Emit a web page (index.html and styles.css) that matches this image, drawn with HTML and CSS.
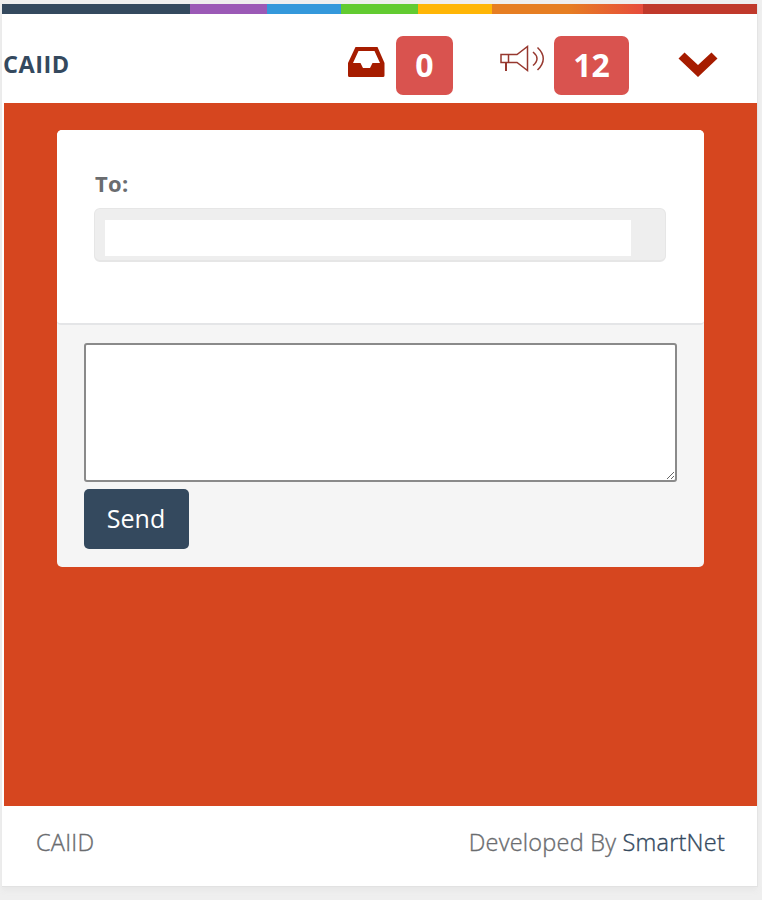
FILE: index.html
```html
<!DOCTYPE html>
<html lang="en">
<head>
<meta charset="utf-8">
<title>CAIID</title>
<link rel="stylesheet" href="styles.css">
</head>
<body>
<div class="page">
  <div class="color-line"></div>
  <header class="header">
    <span class="brand">CAIID</span>
    <nav class="nav">
      <svg class="inbox" width="37" height="30" viewBox="0 0 37 30"><path fill="#a61c00" fill-rule="evenodd" d="M7.500 0H29.500L36.500 16V28.500Q36.500 30 35 30H1.500Q0 30 0 28.500V16ZM10.500 4 5 16H12.500L15 21H22L24.500 16H32L26.500 4Z"/></svg>
      <span class="badge badge-inbox">0</span>
      <svg class="horn" width="45" height="28" viewBox="0 0 45 28"><g fill="none" stroke="#97382f" stroke-width="1.500"><path d="M1 9.500H17L27.500 1.500V25.500L17 17.500H1ZM8.500 9.500V17.500"/><path stroke-width="2" d="M6 17.500V26"/><path d="M33 7Q41 13.500 33 20.500M37.500 2.500Q49 13.500 37.500 25"/></g></svg>
      <span class="badge badge-news">12</span>
      <svg class="chevron" width="40" height="26" viewBox="0 0 40 26"><path fill="#a61c00" d="M.5 6.500 6.500.5 20 13 33.500.5 39.500 6.500 20 25Z"/></svg>
    </nav>
  </header>
  <main class="content">
    <section class="card">
      <div class="recipient">
        <label class="label" for="to">To:</label>
        <div class="field"><input class="to" id="to" type="text"></div>
      </div>
      <form class="compose">
        <textarea class="message" aria-label="Message"></textarea>
        <button class="send" type="button">Send</button>
      </form>
    </section>
  </main>
  <footer class="footer">
    <span>CAIID</span>
    <span>Developed By <a class="link">SmartNet</a></span>
  </footer>
</div>
</body>
</html>
```
FILE: styles.css
```css
* { box-sizing: border-box; }
body {
  margin: 0;
  height: 900px;
  overflow: hidden;
  background: #efefef;
  font-family: "Open Sans", sans-serif;
  color: #6a6c6f;
}
.page {
  width: 755px;
  height: 883px;
  margin: 4px 0 0 2px;
  background: #fff;
  border-bottom: 1px solid #e2e2e2;
  box-shadow: 1px 0 0 #e4e4e4, 0 3px 6px #e6e6e6;
}
.color-line {
  height: 10px;
  background: linear-gradient(to right, #34495e 188px, #9b59b6 188px 265px, #3498db 265px 339px, #62cb31 339px 416px, #ffb606 416px 490px, #e67e22 490px 566px, #e74c3c 641px, #c0392b 641px);
}
.header {
  height: 89px;
  display: flex;
  justify-content: space-between;
}
.brand {
  padding: 35px 0 0 1px;
  font-size: 23.5px;
  letter-spacing: 0.5px;
  line-height: 31px;
  font-weight: 700;
  color: #34495e;
}
.nav {
  display: flex;
  align-items: flex-start;
  padding-right: 39px;
}
.inbox { margin: 33px 11px 0 0; }
.horn { margin: 31px 9px 0 47px; }
.chevron { margin: 38px 0 0 49px; }
.badge {
  height: 59px;
  margin-top: 22px;
  border-radius: 7px;
  background: #d9534f;
  color: #fff;
  font-size: 32px;
  line-height: 58px;
  font-weight: 700;
  text-align: center;
}
.badge-inbox { width: 57px; }
.badge-news { width: 75px; }
.content {
  height: 703px;
  margin-left: 2px;
  padding: 27px 53px 0;
  background: #d6461f;
}
.card {
  width: 647px;
  height: 437px;
  border-radius: 5px;
  background: #f5f5f5;
  overflow: hidden;
}
.recipient {
  height: 195px;
  padding: 38px 38px 0 37px;
  border-bottom: 2px solid #e4e5e7;
  border-radius: 4px;
  background: #fff;
}
.label {
  display: block;
  padding-left: 1px;
  font-size: 22px;
  letter-spacing: 0.3px;
  line-height: 31px;
  font-weight: 700;
}
.field {
  height: 54px;
  margin-top: 9px;
  padding: 11px 34px 4px 10px;
  border: 1px solid #e6e6e6;
  border-bottom-width: 2px;
  border-radius: 6px;
  background: #eee;
}
.to {
  display: block;
  width: 526px;
  height: 36px;
  border: 0;
  background: #fff;
}
.compose { padding: 18px 26px 0 27px; }
.message {
  display: block;
  width: 593px;
  height: 139px;
  border: 2px solid #8a8a8a;
  border-radius: 3px;
  background: #fff;
}
.send {
  display: block;
  width: 105px;
  height: 60px;
  margin-top: 7px;
  padding: 0 1px 2px 0;
  border: 0;
  border-radius: 5px;
  background: #34495e;
  color: #fff;
  font: 25px "Open Sans", sans-serif;
}
.footer {
  height: 79px;
  display: flex;
  justify-content: space-between;
  padding: 20px 32px 0 34px;
  font-size: 23.5px;
  letter-spacing: 0.22px;
  line-height: 32px;
  font-weight: 300;
  -webkit-text-stroke: 0.35px currentColor;
}
.link { color: #34495e; }
```
